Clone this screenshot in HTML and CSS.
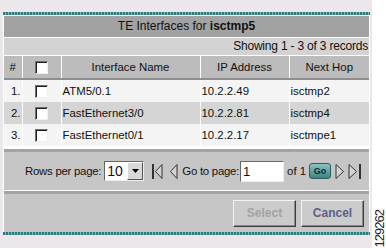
FILE: index.html
```html
<!DOCTYPE html>
<html lang="en">
<head>
    <meta charset="UTF-8">
    <title>TE Interfaces</title>
    <link rel="stylesheet" href="styles.css">
</head>
<body>
    <div class="page">
        <div class="main">
            <div class="panel">
                <div class="teal"></div>
                <div class="title">TE Interfaces for <b>isctmp5</b></div>
                <div class="showing">Showing 1 - 3 of 3 records</div>

                <table class="grid">
                    <colgroup>
                        <col class="c-num"><col class="c-chk"><col class="c-name"><col class="c-ip"><col class="c-hop">
                    </colgroup>
                    <thead>
                        <tr>
                            <th class="num">#</th>
                            <th><span class="box"></span></th>
                            <th>Interface Name</th>
                            <th>IP Address</th>
                            <th>Next Hop</th>
                        </tr>
                    </thead>
                    <tbody>
                        <tr class="odd">
                            <td class="num">1.</td>
                            <td class="chk"><span class="box"></span></td>
                            <td>ATM5/0.1</td>
                            <td>10.2.2.49</td>
                            <td>isctmp2</td>
                        </tr>
                        <tr class="even">
                            <td class="num">2.</td>
                            <td class="chk"><span class="box"></span></td>
                            <td>FastEthernet3/0</td>
                            <td>10.2.2.81</td>
                            <td>isctmp4</td>
                        </tr>
                        <tr class="odd">
                            <td class="num">3.</td>
                            <td class="chk"><span class="box"></span></td>
                            <td>FastEthernet0/1</td>
                            <td>10.2.2.17</td>
                            <td>isctmpe1</td>
                        </tr>
                    </tbody>
                </table>

                <div class="pager">
                    <span class="label">Rows per page:</span>
                    <span class="select"><span class="val">10</span><span class="drop"><svg width="7" height="4" viewBox="0 0 7 4"><polygon points="0,0 7,0 3.5,4" fill="#000"/></svg></span></span>
                    <svg class="nav first" width="11" height="17" viewBox="0 0 11 17">
                        <rect x="0" y="1" width="2" height="15" fill="#333"/>
                        <polygon points="10,1.5 3.5,8.5 10,15.5" fill="#d4d4d4" stroke="#333" stroke-width="1"/>
                    </svg>
                    <svg class="nav prev" width="9" height="17" viewBox="0 0 9 17">
                        <polygon points="8,1.5 1.5,8.5 8,15.5" fill="#d4d4d4" stroke="#333" stroke-width="1"/>
                    </svg>
                    <span class="goto">Go to page:</span>
                    <span class="input">1</span>
                    <span class="of">of 1</span>
                    <span class="go">Go</span>
                    <svg class="nav next" width="10" height="17" viewBox="0 0 10 17">
                        <polygon points="1,1.5 8.5,8.5 1,15.5" fill="#d4d4d4" stroke="#333" stroke-width="1"/>
                    </svg>
                    <svg class="nav last" width="14" height="17" viewBox="0 0 14 17">
                        <polygon points="1,1.5 8.5,8.5 1,15.5" fill="#d4d4d4" stroke="#333" stroke-width="1"/>
                        <rect x="11" y="1" width="2" height="15" fill="#333"/>
                    </svg>
                </div>

                <div class="actions">
                    <button class="btn disabled">Select</button>
                    <button class="btn">Cancel</button>
                </div>
                <div class="teal"></div>
            </div>
        </div>
        <div class="side"><span class="figno">129262</span></div>
    </div>
</body>
</html>
```

FILE: styles.css
```css
body {
    margin: 0;
    font-family: "Liberation Sans", Arial, sans-serif;
    font-size: 11.4px;
    color: #111;
}
.page {
    display: flex;
    width: 386px;
    height: 248px;
    overflow: hidden;
}
.main {
    width: 372px;
    flex-shrink: 0;
    background: #ebe7eb;
    padding-top: 12px;
}
.panel {
    width: 365px;
    margin-left: 3px;
    padding: 0 1px;
    background: #fff;
}
.teal {
    height: 3px;
    margin: 0 -1px;
    background: repeating-linear-gradient(90deg, #2c7c7c 0, #2c7c7c 2px, #7fb8b6 2px, #7fb8b6 3px);
}
.title {
    margin-top: 1px;
    height: 21px;
    line-height: 21px;
    background: #a2a2a2;
    text-align: center;
    font-size: 12px;
}
.showing {
    margin-top: 1px;
    height: 17px;
    line-height: 17px;
    background: #d3d3d3;
    text-align: right;
    padding-right: 1px;
    font-size: 12px;
    letter-spacing: -0.2px;
}
.grid {
    width: 365px;
    margin-top: 1px;
    border-collapse: collapse;
    table-layout: fixed;
}
.c-num { width: 18px; }
.c-chk { width: 39px; }
.c-name { width: 139px; }
.c-ip { width: 89px; }
.c-hop { width: 80px; }
.grid th {
    height: 22px;
    padding: 0;
    background: #bcbcbc;
    font-weight: normal;
    border-left: 1px solid #fff;
    border-bottom: 2px solid #8e8e8e;
}
.grid th:first-child,
.grid td:first-child {
    border-left: none;
}
.grid td {
    height: 22px;
    padding: 0 0 0 1px;
    border-left: 1px solid #fff;
    white-space: nowrap;
}
.grid .num {
    text-align: right;
    padding-right: 1px;
}
.grid th.num {
    text-align: center;
    padding-right: 0;
}
.grid .chk {
    text-align: center;
    padding: 0;
}
.odd td { background: #f4f4f4; }
.even td { background: #d5d5d5; }
.box {
    display: inline-block;
    width: 11px;
    height: 11px;
    vertical-align: middle;
    background: #fff;
    border: 1px solid;
    border-color: #6e6e6e #f0f0f0 #f0f0f0 #6e6e6e;
    box-shadow: inset 1px 1px 0 #222;
}
.pager {
    display: flex;
    align-items: center;
    margin-top: 3px;
    height: 38px;
    padding-left: 21px;
    background: #c6c6c6;
    border-top: 3px solid #a3a3a3;
    white-space: nowrap;
}
.pager > * {
    flex-shrink: 0;
}
.label,
.goto {
    letter-spacing: -0.25px;
}
.select {
    display: flex;
    align-items: center;
    width: 38px;
    height: 18px;
    margin-left: 3px;
    background: #fff;
    border: 1px solid;
    border-color: #666 #eee #eee #666;
}
.select .val {
    flex: 1;
    font-size: 14px;
    padding-left: 2px;
}
.drop {
    display: flex;
    align-items: center;
    justify-content: center;
    width: 14px;
    height: 16px;
    background: #d8d8d8;
    border: 1px solid;
    border-color: #fff #555 #555 #fff;
}
.nav.first { margin-left: 8px; }
.nav.prev { margin-left: 6px; }
.goto { margin-left: 4px; }
.input {
    width: 40px;
    height: 19px;
    line-height: 19px;
    margin-left: 1px;
    padding-left: 2px;
    font-size: 13px;
    background: #fff;
    border: 1px solid;
    border-color: #666 #eee #eee #666;
}
.of { margin-left: 3px; }
.go {
    margin-left: 3px;
    width: 20px;
    height: 14px;
    line-height: 14px;
    text-align: center;
    font-size: 9px;
    font-weight: bold;
    color: #0d2a2a;
    background: linear-gradient(#8cc2c0, #3f8482);
    border: 1px solid #2d5f5e;
    border-radius: 3px;
}
.nav.next { margin-left: 4px; }
.nav.last { margin-left: 3px; }
.actions {
    display: flex;
    justify-content: flex-end;
    align-items: center;
    gap: 5px;
    margin-top: 1px;
    height: 38px;
    padding-right: 5px;
    background: #c6c6c6;
    border-top: 3px solid #a3a3a3;
}
.btn {
    width: 63px;
    height: 27px;
    padding: 0;
    font-family: "Liberation Sans", Arial, sans-serif;
    font-size: 12px;
    font-weight: bold;
    color: #5f5f85;
    background: #cbcbcb;
    border: 1px solid;
    border-color: #f4f4f4 #3c3c3c #3c3c3c #f4f4f4;
    box-shadow: inset -1px -1px 0 #8a8a8a;
}
.btn.disabled {
    color: #a3a3a3;
}
.side {
    width: 14px;
    background: #fff;
    display: flex;
    flex-direction: column;
    justify-content: flex-end;
    align-items: center;
    padding-bottom: 1px;
}
.figno {
    writing-mode: vertical-rl;
    transform: rotate(180deg);
    font-size: 13px;
    letter-spacing: -1px;
    color: #222;
}
```
